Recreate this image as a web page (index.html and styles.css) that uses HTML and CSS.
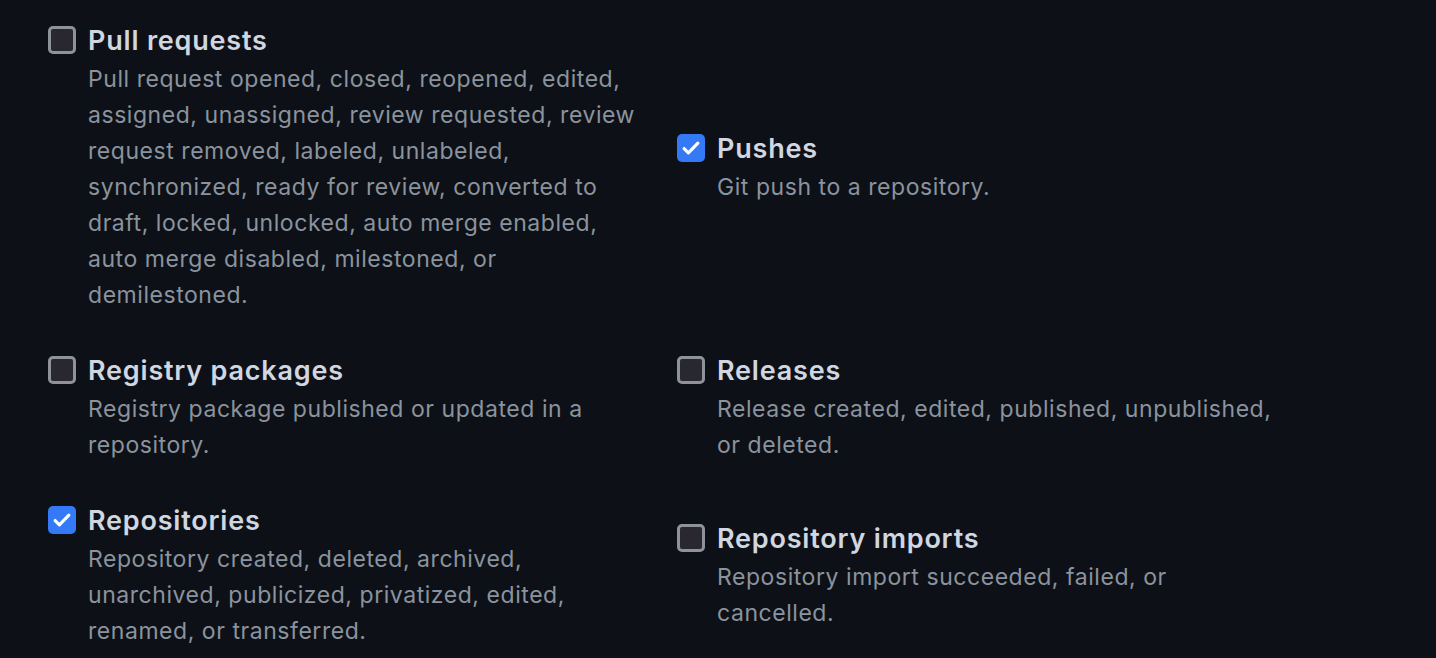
FILE: index.html
```html
<!DOCTYPE html>
<html lang="en">
<head>
<meta charset="utf-8">
<title>Webhook events</title>
<link rel="stylesheet" href="styles.css">
</head>
<body>
<div class="events">
  <label class="event">
    <span class="box"></span>
    <span class="text">
      <span class="title">Pull requests</span>
      <span class="desc">Pull request opened, closed, reopened, edited, assigned, unassigned, review requested, review request removed, labeled, unlabeled, synchronized, ready for review, converted to draft, locked, unlocked, auto merge enabled, auto merge disabled, milestoned, or demilestoned.</span>
    </span>
  </label>
  <label class="event">
    <span class="box checked"><svg viewBox="0 0 16 16" width="22" height="22"><path d="M3 8.4l3.1 3.1 6.9-7" fill="none" stroke="#fff" stroke-width="2.3" stroke-linecap="round" stroke-linejoin="round"/></svg></span>
    <span class="text">
      <span class="title">Pushes</span>
      <span class="desc">Git push to a repository.</span>
    </span>
  </label>
  <label class="event">
    <span class="box"></span>
    <span class="text">
      <span class="title">Registry packages</span>
      <span class="desc">Registry package published or updated in a repository.</span>
    </span>
  </label>
  <label class="event">
    <span class="box"></span>
    <span class="text">
      <span class="title">Releases</span>
      <span class="desc">Release created, edited, published, unpublished, or deleted.</span>
    </span>
  </label>
  <label class="event">
    <span class="box checked"><svg viewBox="0 0 16 16" width="22" height="22"><path d="M3 8.4l3.1 3.1 6.9-7" fill="none" stroke="#fff" stroke-width="2.3" stroke-linecap="round" stroke-linejoin="round"/></svg></span>
    <span class="text">
      <span class="title">Repositories</span>
      <span class="desc">Repository created, deleted, archived, unarchived, publicized, privatized, edited, renamed, or transferred.</span>
    </span>
  </label>
  <label class="event">
    <span class="box"></span>
    <span class="text">
      <span class="title">Repository imports</span>
      <span class="desc">Repository import succeeded, failed, or cancelled.</span>
    </span>
  </label>
</div>
</body>
</html>
```
FILE: styles.css
```css
html, body {
  margin: 0;
  padding: 0;
  background: #0d1117;
}
body {
  font-family: Inter, "Noto Sans", "Liberation Sans", sans-serif;
  padding: 21px 0 0 48px;
  height: 658px;
  box-sizing: border-box;
  overflow: hidden;
}
.events {
  display: grid;
  grid-template-columns: 629px 629px;
  row-gap: 38px;
  align-items: center;
}
.event {
  display: flex;
  align-items: flex-start;
  gap: 12px;
}
.box {
  flex: none;
  width: 28px;
  height: 28px;
  margin-top: 5px;
  box-sizing: border-box;
  border: 3px solid #8e929b;
  border-radius: 5px;
  background: #29272f;
  display: flex;
  align-items: center;
  justify-content: center;
}
.box.checked {
  border: none;
  background: #3479f6;
}
.text {
  display: flex;
  flex-direction: column;
  width: 560px;
}
.title {
  font-size: 27px;
  line-height: 40px;
  font-weight: 600;
  letter-spacing: 0.8px;
  color: #d1d7e0;
}
.desc {
  font-size: 23px;
  line-height: 36px;
  letter-spacing: 0.55px;
  color: #8b939e;
}
```
